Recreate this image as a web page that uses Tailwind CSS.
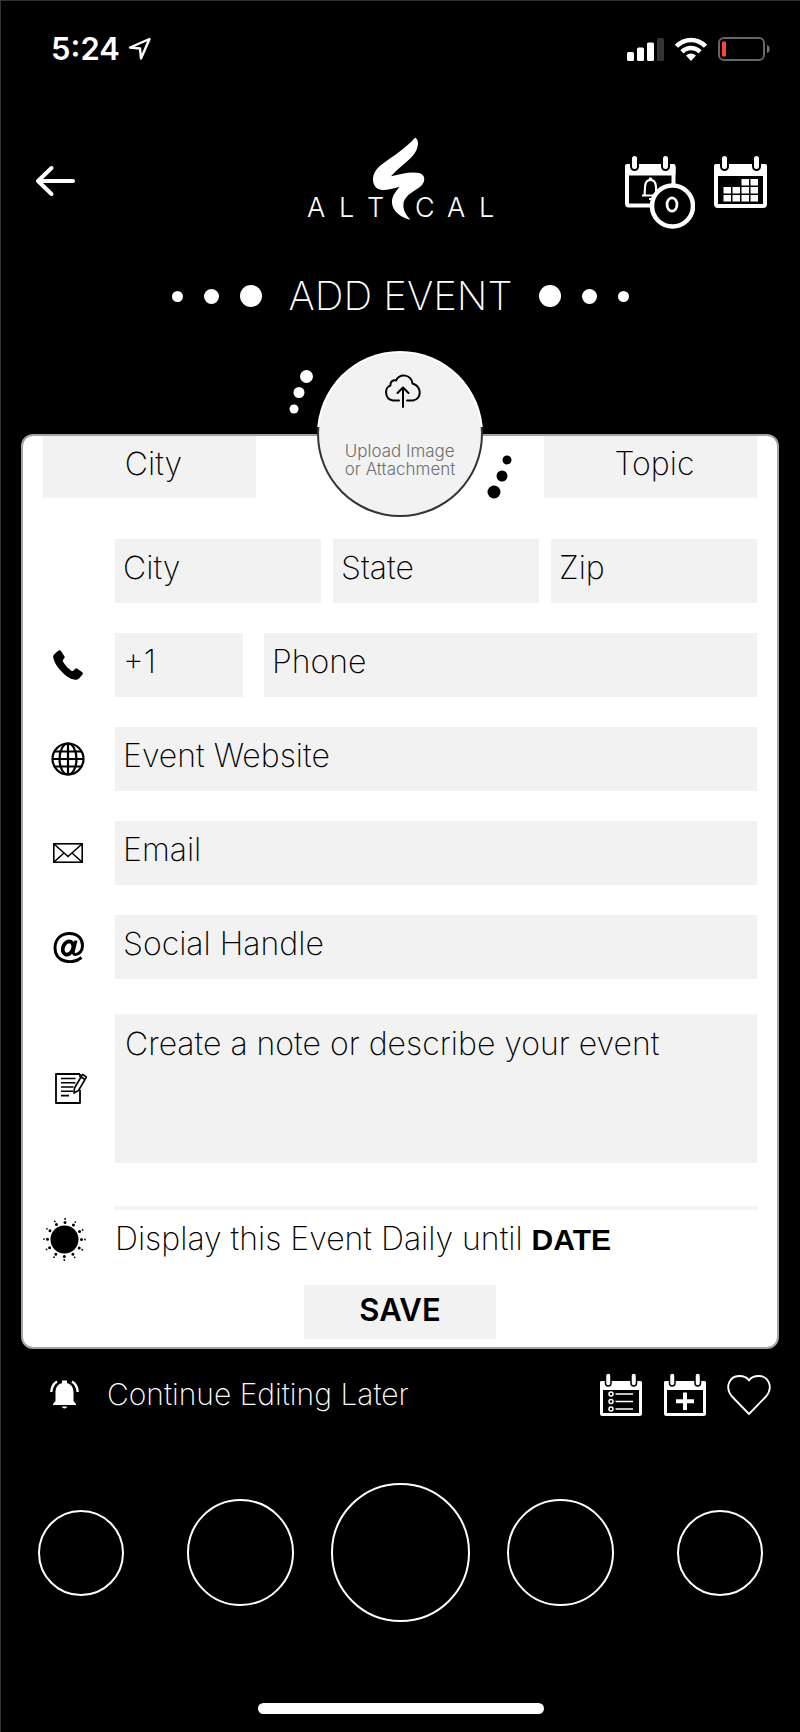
<!DOCTYPE html>
<html lang="en">
<head>
    <meta charset="UTF-8">
    <meta name="viewport" content="width=device-width, initial-scale=1.0">
    <title>AltCal - Add Event</title>
    <script src="https://cdn.jsdelivr.net/npm/@tailwindcss/browser@4"></script>
</head>
<body class="min-h-screen bg-black border-t border-l border-[#333] text-white font-['Inter',sans-serif]">

    <!-- Status bar -->
    <div class="flex items-center justify-between h-24 pl-[50px] pr-[30px]">
        <div class="flex items-center gap-2">
            <span class="text-[31px] font-semibold">5:24</span>
            <svg class="w-6 h-6" viewBox="0 0 24 24" fill="none" stroke="currentColor" stroke-width="2.400" stroke-linejoin="round"><path d="M21.500 2L2 10.500L12 11.500L13 21.500Z"/></svg>
        </div>
        <div class="flex items-center gap-[11px]">
            <svg class="w-[37px] h-6" viewBox="0 0 37 24" fill="currentColor">
                <rect x="0" y="15" width="7" height="9" rx="1.500"/>
                <rect x="10" y="10.500" width="7" height="13.500" rx="1.500"/>
                <rect x="20" y="5.500" width="7" height="18.500" rx="1.500"/>
                <rect x="30" y="1" width="7" height="23" rx="1.500" fill="#333"/>
            </svg>
            <svg class="w-8 h-6" viewBox="0 0 32 24" fill="none" stroke="currentColor" stroke-width="4.500">
                <path d="M1.500 9.300C9.500 .800 22.500 .800 30.500 9.300"/>
                <path d="M7 14.800C12 9.700 20 9.700 25 14.800"/>
                <path d="M11 18.500C14 15.700 18 15.700 21 18.500L16 24Z" fill="currentColor" stroke="none"/>
            </svg>
            <svg class="w-[52px] h-6" viewBox="0 0 52 24" fill="none">
                <rect x="1" y="1" width="45" height="22" rx="5" stroke="#666" stroke-width="2"/>
                <path d="M49 8C52.500 9 52.500 15 49 16Z" fill="#777"/>
                <rect x="4" y="4.500" width="4" height="15" rx="1" fill="#ff453a"/>
            </svg>
        </div>
    </div>

    <!-- Header -->
    <header class="grid grid-cols-[1fr_auto_1fr] items-start pt-10 pl-[34px] pr-8">
        <button type="button" aria-label="Back" class="justify-self-start mt-7">
            <svg class="w-10 h-8" viewBox="0 0 40 32" fill="none" stroke="currentColor" stroke-width="4" stroke-linecap="round" stroke-linejoin="round"><path d="M38 16H3M16.500 3L3 16L16.500 29"/></svg>
        </button>
        <svg class="w-[204px] h-[90px]" viewBox="-7 0 204 90" fill="currentColor">
            <path transform="translate(-16 -8) scale(.3333)" d="M372 26C385 30 384 55 370 74C352 98 320 118 300 142C330 134 360 127 385 132C404 138 404 158 390 171C370 187 345 196 338 220C334 242 345 258 358 272C335 268 305 250 303 222C302 202 312 190 326 173C300 181 275 186 262 180C244 172 240 142 256 122C270 104 300 88 325 68C345 52 360 40 372 26Z"/>
            <text y="80" x="0 32 60" font-size="27" font-weight="300">ALT</text>
            <text y="80" x="108 140 172" font-size="27" font-weight="300">CAL</text>
        </svg>
        <div class="justify-self-end flex items-start gap-[19px] mt-[18px]">
            <button type="button" aria-label="Reminders">
                <svg class="w-[70px] h-[74px]" viewBox="0 0 70 74">
                    <rect x="2" y="11" width="46.500" height="39.500" rx="2" fill="none" stroke="#fff" stroke-width="4"/>
                    <rect x="0" y="9" width="50.500" height="11.500" rx="2" fill="#fff"/>
                    <g fill="#fff" stroke="#000" stroke-width="2"><rect x="6" y="0" width="7" height="15" rx="3.500"/><rect x="37" y="0" width="7" height="15" rx="3.500"/></g>
                    <path d="M17 40.500H35M19.500 40C20.500 36 18 25 25.500 25C33 25 30.500 36 31.500 40M24 44H28" fill="none" stroke="#fff" stroke-width="2.200"/>
                    <circle cx="25.500" cy="24" r="1.800" fill="#fff"/>
                    <circle cx="47.500" cy="51" r="20.500" fill="#000" stroke="#fff" stroke-width="4.500"/>
                    <ellipse cx="47" cy="49.500" rx="5" ry="6.700" fill="none" stroke="#fff" stroke-width="2.700"/>
                </svg>
            </button>
            <button type="button" aria-label="Calendar">
                <svg class="w-[54px] h-[54px]" viewBox="0 0 54 54">
                    <rect x="2" y="11" width="49" height="40" rx="2" fill="none" stroke="#fff" stroke-width="4"/>
                    <rect x="0" y="9" width="53" height="12" rx="2" fill="#fff"/>
                    <g fill="#fff" stroke="#000" stroke-width="2"><rect x="7" y="0" width="7" height="15" rx="3.500"/><rect x="39" y="0" width="7" height="15" rx="3.500"/></g>
                    <path fill="#fff" d="M27.500 24h7.500v6.500h-7.500zM36.500 24h7.500v6.500h-7.500zM9.500 32h7.500v6.500h-7.500zM18.500 32h7.500v6.500h-7.500zM27.500 32h7.500v6.500h-7.500zM36.500 32h7.500v6.500h-7.500zM9.500 40h7.500v6.500h-7.500zM18.500 40h7.500v6.500h-7.500zM27.500 40h7.500v6.500h-7.500zM36.500 40h7.500v6.500h-7.500z"/>
                </svg>
            </button>
        </div>
    </header>

    <!-- Title -->
    <div class="flex items-center justify-center gap-[21px] mt-[47px]">
        <span class="size-[11px] rounded-full bg-white"></span>
        <span class="size-[15px] rounded-full bg-white"></span>
        <span class="size-[22px] rounded-full bg-white"></span>
        <h1 class="text-[40px] leading-10 font-extralight px-1.5">ADD EVENT</h1>
        <span class="size-[22px] rounded-full bg-white"></span>
        <span class="size-[15px] rounded-full bg-white"></span>
        <span class="size-[11px] rounded-full bg-white"></span>
    </div>

    <!-- Event form -->
    <form class="relative mt-[118px] ml-5 mr-[21px] px-5 pb-2 bg-white text-black border-2 border-[#a3a3a3] rounded-xl text-[32px] font-extralight">

        <!-- Upload badge over the top edge -->
        <svg class="absolute left-1/2 -translate-x-1/2 -top-[88px] w-[230px] h-[170px]" viewBox="0 0 230 170">
            <g fill="#fff"><circle cx="21.500" cy="28.500" r="6.500"/><circle cx="14" cy="44.500" r="5.500"/><circle cx="9" cy="61" r="4.500"/></g>
            <g fill="#000"><circle cx="222" cy="112" r="4.500"/><circle cx="217" cy="128" r="5.500"/><circle cx="209" cy="144" r="6.500"/></g>
        </svg>
        <button type="button" class="absolute left-1/2 -translate-x-1/2 -top-[85px] size-[166px] rounded-full p-0.5 bg-linear-to-b from-white from-46% to-[#333] to-46%">
            <span class="flex flex-col items-center size-full rounded-full bg-[#f2f2f2] pt-[21px]">
                <svg class="w-9 h-[35px] ml-1.5" viewBox="0 0 36 35" fill="none" stroke="#000" stroke-width="2" stroke-linecap="round" stroke-linejoin="round">
                    <path d="M14 26.500H8C-1 25-.500 13 5.500 11.500C5 7 8.500 6 11 6.500C15-1 26 0 27.500 9.500C37 12.500 37 25 28 26.500H22"/>
                    <path d="M18 33V13.500M12.500 19L18 13.500L23.500 19"/>
                </svg>
                <span class="mt-[33px] text-left text-[17px] leading-[18px] font-light text-[#707070]">Upload Image<br>or Attachment</span>
            </span>
        </button>

        <div class="flex justify-between">
            <input type="text" aria-label="Event city" placeholder="City" class="w-[213px] h-[62px] pl-2 pb-2 bg-[#f2f2f2] text-center placeholder:text-black">
            <input type="text" aria-label="Topic" placeholder="Topic" class="w-[213px] h-[62px] pl-2 pb-2 bg-[#f2f2f2] text-center placeholder:text-black">
        </div>

        <div class="flex gap-3 mt-[41px] pl-[72px]">
            <input type="text" aria-label="City" placeholder="City" class="flex-1 min-w-0 h-16 px-2 pb-2 bg-[#f2f2f2] placeholder:text-black">
            <input type="text" aria-label="State" placeholder="State" class="flex-1 min-w-0 h-16 px-2 pb-2 bg-[#f2f2f2] placeholder:text-black">
            <input type="text" aria-label="Zip" placeholder="Zip" class="flex-1 min-w-0 h-16 px-2 pb-2 bg-[#f2f2f2] placeholder:text-black">
        </div>

        <div class="flex items-center mt-[30px]">
            <label for="phone" aria-label="Phone" class="flex justify-center w-[50px] mr-[22px]">
                <svg class="w-[30px] h-[30px]" viewBox="0 0 30 30"><path d="M5 1Q6.500-.500 8 1L11.500 6.500Q12 7.500 11 8.500L10 10Q9.500 11 10.500 12.500Q13.500 17.500 18 20.500Q19.500 21.500 20.500 20.500L22 19Q23 18 24 18.500L29 22Q30.500 23 29.500 24.500L26 28.500Q24 30.500 21 29.500Q15 28.500 9 22Q2 15 .500 8.500Q-.500 5.500 1.500 4Z"/></svg>
            </label>
            <input type="tel" aria-label="Country code" placeholder="+1" class="w-32 h-16 px-2 pb-2 mr-[21px] bg-[#f2f2f2] placeholder:text-black">
            <input id="phone" type="tel" placeholder="Phone" class="flex-1 min-w-0 h-16 px-2 pb-2 bg-[#f2f2f2] placeholder:text-black">
        </div>

        <div class="flex items-center mt-[30px]">
            <label for="website" aria-label="Event Website" class="flex justify-center w-[50px] mr-[22px]">
                <svg class="w-[34px] h-[34px]" viewBox="0 0 34 34" fill="none" stroke="#000" stroke-width="2.200">
                    <circle cx="17" cy="17" r="15.500"/>
                    <ellipse cx="17" cy="17" rx="8.500" ry="15.500"/>
                    <path d="M17 1.500V32.500M4 9.500H30M1.500 17H32.500M4 24.500H30"/>
                </svg>
            </label>
            <input id="website" type="url" placeholder="Event Website" class="flex-1 min-w-0 h-16 px-2 pb-2 bg-[#f2f2f2] placeholder:text-black">
        </div>

        <div class="flex items-center mt-[30px]">
            <label for="email" aria-label="Email" class="flex justify-center w-[50px] mr-[22px]">
                <svg class="w-[30px] h-[20px]" viewBox="0 0 30 20" fill="none" stroke="#000" stroke-width="1.600"><rect x=".800" y=".800" width="28.400" height="18.400"/><path d="M1 1L15 13.500L29 1M1 19L11 10M29 19L19 10"/></svg>
            </label>
            <input id="email" type="email" placeholder="Email" class="flex-1 min-w-0 h-16 px-2 pb-2 bg-[#f2f2f2] placeholder:text-black">
        </div>

        <div class="flex items-center mt-[30px]">
            <label for="social" aria-label="Social Handle" class="flex justify-center w-[50px] mr-[22px]">
                <svg class="w-[31px] h-[31px]" viewBox="0 0 31 31" fill="none" stroke="#000">
                    <path d="M28.500 25.500C20 32.500 2 31 2 16C2 6 9 1.500 16.500 1.500C25 1.500 29.500 7 29.500 13.500C29.500 19 26 22.500 22.500 22.500C20 22.500 20 20.500 20.500 18.500L23 8.500" stroke-width="3"/>
                    <ellipse cx="15" cy="16" rx="5" ry="6.800" transform="rotate(24 15 16)" stroke-width="3.800"/>
                </svg>
            </label>
            <input id="social" type="text" placeholder="Social Handle" class="flex-1 min-w-0 h-16 px-2 pb-2 bg-[#f2f2f2] placeholder:text-black">
        </div>

        <div class="flex items-center mt-[35px]">
            <label for="note" aria-label="Note" class="flex justify-center w-14 mr-4">
                <svg class="w-8 h-[31px]" viewBox="0 0 32 31" fill="none" stroke="#000" stroke-width="1.600" stroke-linejoin="round">
                    <path d="M25 1H1V30H25V17M25 1V4" stroke-width="1.800"/>
                    <path d="M6 5.500H20.500M6 9.800H20.500M6 14H18.500M6 18.300H18.500M6 22.600H14"/>
                    <path d="M19.500 15L27.500 1.500L31.500 4L23.500 17.500L19 20ZM26 4L30 6.500" fill="#fff"/>
                </svg>
            </label>
            <textarea id="note" placeholder="Create a note or describe your event" class="flex-1 min-w-0 h-[149px] px-2.5 py-1.5 resize-none bg-[#f2f2f2] placeholder:text-black"></textarea>
        </div>

        <div class="h-1 mt-[43px] ml-[72px] bg-[#f2f2f2]"></div>

        <div class="flex items-center mt-2">
            <svg class="w-[43px] h-[43px] mr-[29px]" viewBox="0 0 43 43">
                <circle cx="21.500" cy="21.500" r="14"/>
                <circle cx="21.500" cy="21.500" r="17" fill="none" stroke="#000" stroke-width="3" stroke-linecap="round" stroke-dasharray="0 8.901"/>
                <circle cx="21.500" cy="21.500" r="20.500" fill="none" stroke="#000" stroke-width="1.800" stroke-linecap="round" stroke-dasharray="0 10.734"/>
            </svg>
            <p class="leading-10">Display this Event Daily until <button type="button" class="font-['Liberation_Sans',sans-serif] text-[30px] font-bold">DATE</button></p>
        </div>

        <button type="submit" class="block w-48 h-[54px] mt-6 mx-auto pb-1 bg-[#f2f2f2] text-[31px] font-semibold">SAVE</button>
    </form>

    <!-- Actions -->
    <div class="flex items-center mt-[23px] pl-[49px] pr-[29px]">
        <a href="#" class="flex items-center gap-7 mr-auto text-[30px] font-extralight">
            <svg class="w-[29px] h-[29px]" viewBox="0 0 29 29" fill="currentColor">
                <path d="M12 3V.500H17V3C22 4.500 23.500 8 23.500 13V21L26 24V25H3V24L5.500 21V13C5.500 8 7 4.500 12 3ZM11.500 26.500H17.500Q14.500 30.500 11.500 26.500Z"/>
                <path d="M1.300 12Q1.500 5 7 1.500M27.700 12Q27.500 5 22 1.500" fill="none" stroke="currentColor" stroke-width="2.400"/>
            </svg>
            Continue Editing Later
        </a>
        <div class="flex items-center gap-5">
            <button type="button" aria-label="Event list">
                <svg class="w-11 h-11" viewBox="0 0 44 44">
                    <rect x="2.500" y="9.500" width="39" height="32" rx="1" fill="none" stroke="#fff" stroke-width="3"/>
                    <rect x="1" y="8" width="42" height="9" rx="1.500" fill="#fff"/>
                    <g fill="#fff" stroke="#000" stroke-width="1.500"><rect x="6.500" y="0" width="5.500" height="13" rx="2.700"/><rect x="32" y="0" width="5.500" height="13" rx="2.700"/></g>
                    <g fill="none" stroke="#fff" stroke-width="1.500"><circle cx="12" cy="21" r="2"/><circle cx="12" cy="28.500" r="2"/><circle cx="12" cy="36" r="2"/><path d="M16.500 21H34M16.500 28.500H34M16.500 36H34"/></g>
                </svg>
            </button>
            <button type="button" aria-label="Add event">
                <svg class="w-11 h-11" viewBox="0 0 44 44">
                    <rect x="2.500" y="9.500" width="39" height="32" rx="1" fill="none" stroke="#fff" stroke-width="3"/>
                    <rect x="1" y="8" width="42" height="9" rx="1.500" fill="#fff"/>
                    <g fill="#fff" stroke="#000" stroke-width="1.500"><rect x="6.500" y="0" width="5.500" height="13" rx="2.700"/><rect x="32" y="0" width="5.500" height="13" rx="2.700"/></g>
                    <path d="M22 19.500V37M13 28.300H31" stroke="#fff" stroke-width="4"/>
                </svg>
            </button>
            <button type="button" aria-label="Favorites">
                <svg class="w-11 h-11" viewBox="0 0 44 44" fill="none" stroke="currentColor" stroke-width="1.800" stroke-linejoin="round"><path d="M22 41L5 23.500C-3 14 3 3 12 3C16 3 20 4 22 7.500C24 4 28 3 32 3C41 3 47 14 39 23.500Z"/></svg>
            </button>
        </div>
    </div>

    <!-- Bottom navigation -->
    <nav class="grid grid-cols-5 items-center justify-items-center mt-[66px]">
        <button type="button" aria-label="Tab 1" class="size-[86px] rounded-full border-2 border-white"></button>
        <button type="button" aria-label="Tab 2" class="size-[107px] rounded-full border-2 border-white"></button>
        <button type="button" aria-label="Tab 3" class="size-[139px] rounded-full border-2 border-white"></button>
        <button type="button" aria-label="Tab 4" class="size-[107px] rounded-full border-2 border-white"></button>
        <button type="button" aria-label="Tab 5" class="size-[86px] rounded-full border-2 border-white"></button>
    </nav>

    <div class="w-[286px] h-[11px] mt-[81px] mb-4 mx-auto rounded-full bg-white"></div>
</body>
</html>
